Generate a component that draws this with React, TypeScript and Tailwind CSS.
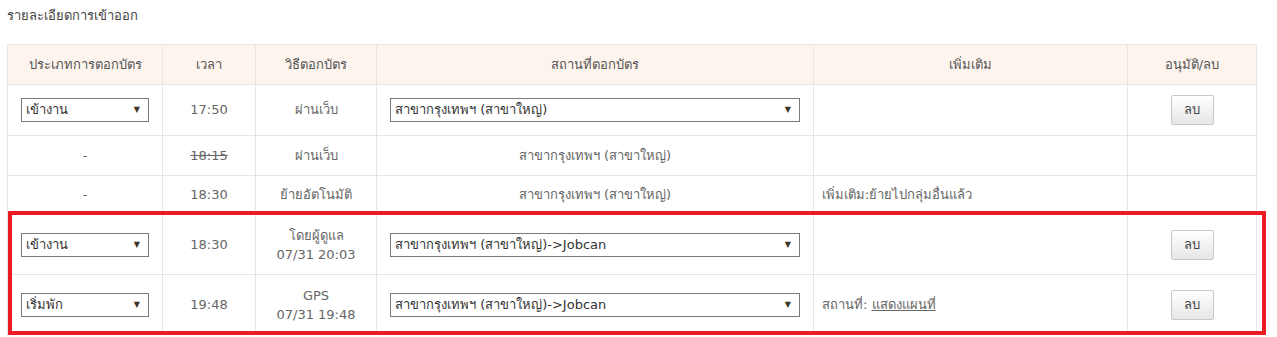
import React from 'react';

const font = { fontFamily: '"DejaVu Sans", Tahoma, "Noto Sans", sans-serif' };

function Select({ value, width }: { value: string; width: string }) {
  return (
    <div className={`${width} h-6 border border-[#7a7a7a] bg-white flex items-center justify-between pl-1 pr-2 text-[13px] text-[#333]`}>
      <span className="truncate">{value}</span>
      <span className="text-[8px] text-[#3a3326]">▼</span>
    </div>
  );
}

function DeleteButton() {
  return (
    <button className="w-[43px] h-[30px] border border-[#c8c8c8] rounded-[2px] bg-gradient-to-b from-white to-[#e6e6e6] text-[13px] text-[#444]">
      ลบ
    </button>
  );
}

const td = 'border border-[#e6e6e6] px-2 text-center align-middle';

export default function App() {
  return (
    <div className="bg-white w-[1277px] h-[337px] px-[7px] pt-[6px] text-[#666] text-[13px]" style={font}>
      <div className="h-[38px] text-[#444]">รายละเอียดการเข้าออก</div>
      <div className="relative w-[1249px]">
        <table className="w-[1249px] table-fixed border-collapse">
          <colgroup>
            <col className="w-[155px]" />
            <col className="w-[93px]" />
            <col className="w-[121px]" />
            <col className="w-[437px]" />
            <col className="w-[314px]" />
            <col className="w-[129px]" />
          </colgroup>
          <thead>
            <tr className="h-[40px] bg-[#fdf4ee] text-[#555]">
              <th className={`${td} font-normal`}>ประเภทการตอกบัตร</th>
              <th className={`${td} font-normal`}>เวลา</th>
              <th className={`${td} font-normal`}>วิธีตอกบัตร</th>
              <th className={`${td} font-normal`}>สถานที่ตอกบัตร</th>
              <th className={`${td} font-normal`}>เพิ่มเติม</th>
              <th className={`${td} font-normal`}>อนุมัติ/ลบ</th>
            </tr>
          </thead>
          <tbody>
            <tr className="h-[51px]">
              <td className={td}><div className="flex justify-center"><Select value="เข้างาน" width="w-[128px]" /></div></td>
              <td className={td}>17:50</td>
              <td className={td}>ผ่านเว็บ</td>
              <td className={td}><div className="flex justify-center"><Select value="สาขากรุงเทพฯ (สาขาใหญ่)" width="w-[410px]" /></div></td>
              <td className={td}></td>
              <td className={td}><DeleteButton /></td>
            </tr>
            <tr className="h-[40px]">
              <td className={td}>-</td>
              <td className={`${td} line-through`}>18:15</td>
              <td className={td}>ผ่านเว็บ</td>
              <td className={td}>สาขากรุงเทพฯ (สาขาใหญ่)</td>
              <td className={td}></td>
              <td className={td}></td>
            </tr>
            <tr className="h-[39px]">
              <td className={td}>-</td>
              <td className={td}>18:30</td>
              <td className={td}>ย้ายอัตโนมัติ</td>
              <td className={td}>สาขากรุงเทพฯ (สาขาใหญ่)</td>
              <td className={`${td} text-left`}>เพิ่มเติม:ย้ายไปกลุ่มอื่นแล้ว</td>
              <td className={td}></td>
            </tr>
            <tr className="h-[60px]">
              <td className={td}><div className="flex justify-center"><Select value="เข้างาน" width="w-[128px]" /></div></td>
              <td className={td}>18:30</td>
              <td className={`${td} leading-[19px]`}>โดยผู้ดูแล<br />07/31 20:03</td>
              <td className={td}><div className="flex justify-center"><Select value="สาขากรุงเทพฯ (สาขาใหญ่)->Jobcan" width="w-[410px]" /></div></td>
              <td className={td}></td>
              <td className={td}><DeleteButton /></td>
            </tr>
            <tr className="h-[60px]">
              <td className={td}><div className="flex justify-center"><Select value="เริ่มพัก" width="w-[128px]" /></div></td>
              <td className={td}>19:48</td>
              <td className={`${td} leading-[19px]`}>GPS<br />07/31 19:48</td>
              <td className={td}><div className="flex justify-center"><Select value="สาขากรุงเทพฯ (สาขาใหญ่)->Jobcan" width="w-[410px]" /></div></td>
              <td className={`${td} text-left`}>
                สถานที่: <a href="#" className="underline">แสดงแผนที่</a>
              </td>
              <td className={td}><DeleteButton /></td>
            </tr>
          </tbody>
        </table>
        <div className="absolute left-[1px] top-[167px] w-[1258px] h-[124px] border-[4px] border-[#ed1c24] pointer-events-none" />
      </div>
    </div>
  );
}
